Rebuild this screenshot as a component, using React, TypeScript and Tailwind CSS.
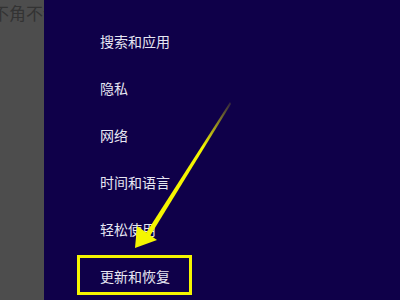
const items = ["搜索和应用", "隐私", "网络", "时间和语言", "轻松使用", "更新和恢复"];

export default function App() {
  return (
    <div
      className="relative flex h-[300px] w-[400px] overflow-hidden"
      style={{ fontFamily: '"Noto Sans CJK SC", "Noto Sans", sans-serif' }}
    >
      <div className="w-[44px] shrink-0 overflow-hidden bg-[#4d4d4d]">
        <div className="ml-[-8px] mt-[3px] whitespace-nowrap text-[17px] leading-[20px] text-[#333333]">
          不角不设
        </div>
      </div>
      <div className="flex-1 bg-[#0f0049] pl-[56px] pt-[18px]">
        {items.map((item) => (
          <div key={item} className="flex h-[47px] items-center text-[14px] text-[#e6e6f2]">
            {item}
          </div>
        ))}
      </div>

      {/* annotation */}
      <div className="absolute left-[77px] top-[255px] h-[40px] w-[115px] border-[3px] border-[#f5f500]" />
      <svg className="absolute left-0 top-0" width="400" height="300" viewBox="0 0 400 300">
        <defs>
          <linearGradient id="g" x1="230" y1="102" x2="150" y2="230" gradientUnits="userSpaceOnUse">
            <stop offset="0" stopColor="#f5f500" stopOpacity="0.15" />
            <stop offset="0.35" stopColor="#f5f500" />
            <stop offset="1" stopColor="#f5f500" />
          </linearGradient>
        </defs>
        <polygon points="230,102 231,104 150,236 146,233" fill="url(#g)" />
        <polygon points="135,248 137,226 157,240" fill="#f5f500" />
      </svg>
    </div>
  );
}
